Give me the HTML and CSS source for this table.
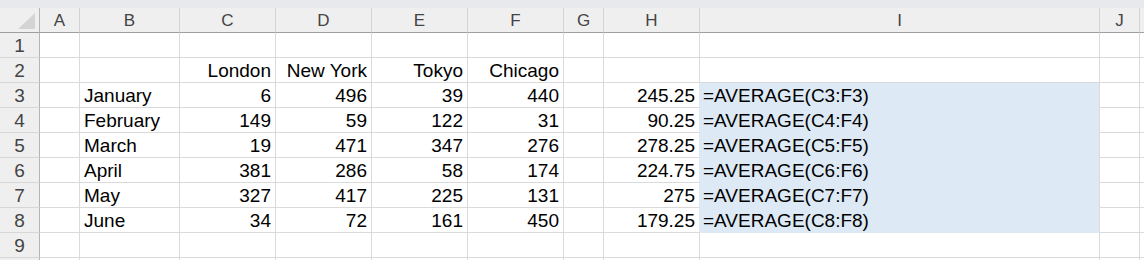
FILE: index.html
```html
<!DOCTYPE html>
<html>
<head>
<meta charset="utf-8">
<link rel="stylesheet" href="styles.css">
</head>
<body>
<div class="sheet">
  <div class="band"></div>
  <div class="grid">
    <div class="c corner"><svg class="tri" width="17" height="16" viewBox="0 0 17 16"><polygon points="0,16 17,0 17,16" fill="#d4d4d4"/></svg></div>
    <div class="c ch">A</div><div class="c ch">B</div><div class="c ch">C</div><div class="c ch">D</div><div class="c ch">E</div><div class="c ch">F</div><div class="c ch">G</div><div class="c ch">H</div><div class="c ch">I</div><div class="c ch">J</div><div class="c ch x"></div>

    <div class="c rh">1</div><div class="c"></div><div class="c"></div><div class="c"></div><div class="c"></div><div class="c"></div><div class="c"></div><div class="c"></div><div class="c"></div><div class="c"></div><div class="c"></div><div class="c x"></div>

    <div class="c rh">2</div><div class="c"></div><div class="c"></div><div class="c r">London</div><div class="c r">New York</div><div class="c r">Tokyo</div><div class="c r">Chicago</div><div class="c"></div><div class="c"></div><div class="c"></div><div class="c"></div><div class="c x"></div>

    <div class="c rh">3</div><div class="c"></div><div class="c">January</div><div class="c r">6</div><div class="c r">496</div><div class="c r">39</div><div class="c r">440</div><div class="c"></div><div class="c r hf">245.25</div><div class="c fill">=AVERAGE(C3:F3)</div><div class="c"></div><div class="c x"></div>

    <div class="c rh">4</div><div class="c"></div><div class="c">February</div><div class="c r">149</div><div class="c r">59</div><div class="c r">122</div><div class="c r">31</div><div class="c"></div><div class="c r hf">90.25</div><div class="c fill">=AVERAGE(C4:F4)</div><div class="c"></div><div class="c x"></div>

    <div class="c rh">5</div><div class="c"></div><div class="c">March</div><div class="c r">19</div><div class="c r">471</div><div class="c r">347</div><div class="c r">276</div><div class="c"></div><div class="c r hf">278.25</div><div class="c fill">=AVERAGE(C5:F5)</div><div class="c"></div><div class="c x"></div>

    <div class="c rh">6</div><div class="c"></div><div class="c">April</div><div class="c r">381</div><div class="c r">286</div><div class="c r">58</div><div class="c r">174</div><div class="c"></div><div class="c r hf">224.75</div><div class="c fill">=AVERAGE(C6:F6)</div><div class="c"></div><div class="c x"></div>

    <div class="c rh">7</div><div class="c"></div><div class="c">May</div><div class="c r">327</div><div class="c r">417</div><div class="c r">225</div><div class="c r">131</div><div class="c"></div><div class="c r hf">275</div><div class="c fill">=AVERAGE(C7:F7)</div><div class="c"></div><div class="c x"></div>

    <div class="c rh">8</div><div class="c"></div><div class="c">June</div><div class="c r">34</div><div class="c r">72</div><div class="c r">161</div><div class="c r">450</div><div class="c"></div><div class="c r hf">179.25</div><div class="c fill">=AVERAGE(C8:F8)</div><div class="c"></div><div class="c x"></div>

    <div class="c rh">9</div><div class="c"></div><div class="c"></div><div class="c"></div><div class="c"></div><div class="c"></div><div class="c"></div><div class="c"></div><div class="c"></div><div class="c"></div><div class="c"></div><div class="c x"></div>

    <div class="c rh"></div><div class="c"></div><div class="c"></div><div class="c"></div><div class="c"></div><div class="c"></div><div class="c"></div><div class="c"></div><div class="c"></div><div class="c"></div><div class="c"></div><div class="c x"></div>
  </div>
</div>
</body>
</html>
```

FILE: styles.css
```css
html, body {
  margin: 0;
  padding: 0;
  background: #ffffff;
  overflow: hidden;
}

.sheet {
  width: 1144px;
  height: 260px;
  overflow: hidden;
  font-family: "Liberation Sans", Arial, sans-serif;
  color: #000000;
}

.band {
  height: 8px;
  background: #e8e9ec;
}

.grid {
  display: grid;
  grid-template-columns: 40px 40px 100px 96px 96px 96px 96px 40px 96px 400px 40px 1fr;
  grid-auto-rows: 25px;
}

.c {
  box-sizing: border-box;
  border-right: 1px solid #dadada;
  border-bottom: 1px solid #dadada;
  padding: 1px 4px 0 4px;
  font-size: 19px;
  line-height: 23px;
  white-space: nowrap;
  overflow: hidden;
}

.r {
  text-align: right;
}

.x {
  border-right: none;
}

.ch {
  background: #efefef;
  border-right-color: #d3d3d3;
  border-bottom-color: #9e9e9e;
  color: #444444;
  text-align: center;
  font-size: 17px;
  padding: 2px 0 0 0;
  line-height: 22px;
}

.corner {
  background: #efefef;
  border-right-color: #b4b4b4;
  border-bottom-color: #9e9e9e;
  padding: 0;
  display: flex;
  justify-content: flex-end;
  align-items: flex-end;
}

.tri {
  display: block;
  margin: 0 4px 3px 0;
}

.rh {
  background: #efefef;
  border-right-color: #b4b4b4;
  border-bottom-color: #d6d6d6;
  color: #444444;
  text-align: center;
  padding: 2px 0 0 0;
  line-height: 22px;
}

.fill {
  background: #dde9f5;
  border-bottom-color: #dde9f5;
  padding-left: 3px;
}

.hf {
  border-right-color: #dde9f5;
}
```
